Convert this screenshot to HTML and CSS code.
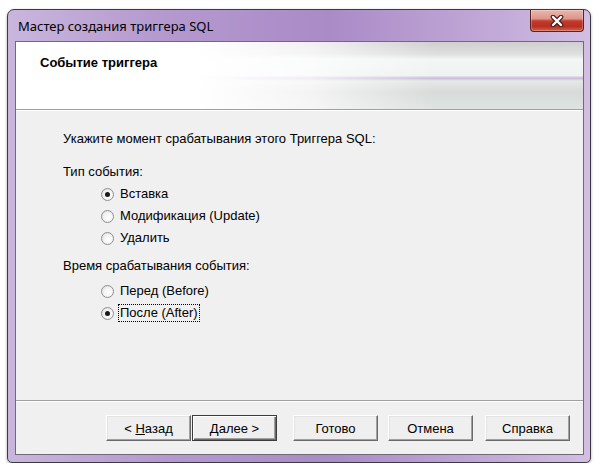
FILE: index.html
```html
<!DOCTYPE html>
<html lang="ru">
<head>
    <meta charset="UTF-8">
    <title>Мастер создания триггера SQL</title>
    <link rel="stylesheet" href="styles.css">
</head>
<body>
    <div class="window">
        <div class="titlebar">
            <span class="title">Мастер создания триггера SQL</span>
            <button class="close-btn" aria-label="Закрыть">
                <svg width="16" height="12" viewBox="0 0 16 12">
                    <path d="M4 2 L12 10 M12 2 L4 10" stroke="#4b1f1a" stroke-width="4.6" stroke-linecap="round"/>
                    <path d="M4 2 L12 10 M12 2 L4 10" stroke="#ffffff" stroke-width="2.4" stroke-linecap="round"/>
                </svg>
            </button>
        </div>

        <div class="client">
            <div class="header">
                <h1>Событие триггера</h1>
            </div>

            <div class="content">
                <p class="intro">Укажите момент срабатывания этого Триггера SQL:</p>

                <p class="group-label">Тип события:</p>
                <ul class="radio-list">
                    <li class="radio checked"><span class="circle"></span><span class="label">Вставка</span></li>
                    <li class="radio"><span class="circle"></span><span class="label">Модификация (Update)</span></li>
                    <li class="radio"><span class="circle"></span><span class="label">Удалить</span></li>
                </ul>

                <p class="group-label group-label-time">Время срабатывания события:</p>
                <ul class="radio-list radio-list-time">
                    <li class="radio"><span class="circle"></span><span class="label">Перед (Before)</span></li>
                    <li class="radio checked"><span class="circle"></span><span class="label focused">После (After)</span></li>
                </ul>
            </div>

            <div class="footer">
                <button class="btn">&lt; <u>Н</u>азад</button>
                <button class="btn btn-default"><u>Д</u>алее &gt;</button>
                <button class="btn btn-finish">Готово</button>
                <button class="btn btn-cancel">Отмена</button>
                <button class="btn btn-help">Справка</button>
            </div>
        </div>
    </div>
</body>
</html>
```

FILE: styles.css
```css
* {
    margin: 0;
    padding: 0;
    box-sizing: border-box;
}

body {
    background: #ffffff;
    font-family: 'Liberation Sans', Arial, sans-serif;
    font-size: 13px;
    color: #000;
}

.window {
    margin: 9px 0 0 7px;
    width: 584px;
    height: 454px;
    border: 1px solid #3d3a42;
    border-radius: 7px 7px 5px 5px;
    background: linear-gradient(to right, #c9b6dd 0%, #b59acf 25%, #a98bc6 55%, #c3abd9 85%, #d2bfe3 100%);
    padding: 0 6px 7px 7px;
    display: flex;
    flex-direction: column;
    box-shadow: 0 1px 3px rgba(0, 0, 0, 0.35);
}

.titlebar {
    height: 31px;
    display: flex;
    align-items: center;
    justify-content: space-between;
}

.title {
    font-family: 'Noto Sans', 'Open Sans', sans-serif;
    font-size: 13px;
    padding-left: 3px;
    color: #000;
}

.close-btn {
    align-self: flex-start;
    width: 54px;
    height: 22px;
    border: 1px solid #5b221b;
    border-top: none;
    border-radius: 0 0 4px 4px;
    background: linear-gradient(#e9b7af 0%, #dd958a 42%, #c43a2c 52%, #b92e20 78%, #d0644e 100%);
    display: flex;
    align-items: center;
    justify-content: center;
    box-shadow: inset 0 0 0 1px rgba(255, 255, 255, 0.25);
}

.client {
    flex: 1;
    border: 1px solid #6f6a75;
    background: #f0f0f0;
    display: flex;
    flex-direction: column;
}

.header {
    height: 68px;
    border-bottom: 1px solid #a0a0a0;
    box-shadow: 0 1px 0 #ffffff;
    background:
        linear-gradient(to right, #ffffff 0%, #ffffff 32%, rgba(255, 255, 255, 0.7) 52%, rgba(255, 255, 255, 0) 74%),
        linear-gradient(to bottom, #cfcfcf 0%, #dedede 18%, #f3f6f5 26%, #eef2f0 50%, #c9b9d9 54%, #e4e8e6 58%, #d6dad8 75%, #dfe3e1 100%);
}

.header h1 {
    font-size: 13px;
    font-weight: bold;
    line-height: 16px;
    padding: 13px 0 0 24px;
}

.content {
    flex: 1;
    padding-left: 47px;
    padding-top: 1px;
    line-height: 16px;
}

.intro {
    margin-top: 20px;
}

.group-label {
    margin-top: 17px;
}

.group-label-time {
    margin-top: 9px;
}

.radio-list {
    list-style: none;
    margin: 3px 0 0 38px;
}

.radio-list-time {
    margin-top: 6px;
}

.radio {
    height: 22px;
    display: flex;
    align-items: center;
}

.circle {
    width: 13px;
    height: 13px;
    border-radius: 50%;
    border: 1px solid #8e8f8f;
    background: radial-gradient(circle at 60% 60%, #ffffff 0%, #f4f4f4 45%, #d9d9d9 100%);
    margin-right: 6px;
    display: flex;
    align-items: center;
    justify-content: center;
}

.checked .circle::after {
    content: '';
    width: 5px;
    height: 5px;
    border-radius: 50%;
    background: #1a1a1a;
}

.label {
    border: 1px solid transparent;
    padding: 0 1px;
    margin-left: -2px;
}

.focused {
    border: 1px dotted #000;
}

.footer {
    height: 54px;
    border-top: 1px solid #a0a0a0;
    box-shadow: inset 0 1px 0 #ffffff;
    display: flex;
    justify-content: flex-end;
    align-items: flex-start;
    padding: 14px 13px 0 0;
}

.btn {
    width: 85px;
    height: 26px;
    font-family: 'Liberation Sans', Arial, sans-serif;
    font-size: 13px;
    color: #000;
    background: #efefef;
    border: 1px solid;
    border-color: #ffffff #6a6a6a #6a6a6a #ffffff;
    box-shadow: inset -1px -1px 0 #a0a0a0, inset 1px 1px 0 #e3e3e3;
}

.btn-default {
    margin-left: 1px;
    border-color: #3c3c3c;
    box-shadow: inset 1px 1px 0 #ffffff, inset -1px -1px 0 #6a6a6a, inset -2px -2px 0 #a0a0a0;
}

.btn-finish {
    margin-left: 16px;
}

.btn-cancel {
    margin-left: 10px;
}

.btn-help {
    margin-left: 12px;
}
```
